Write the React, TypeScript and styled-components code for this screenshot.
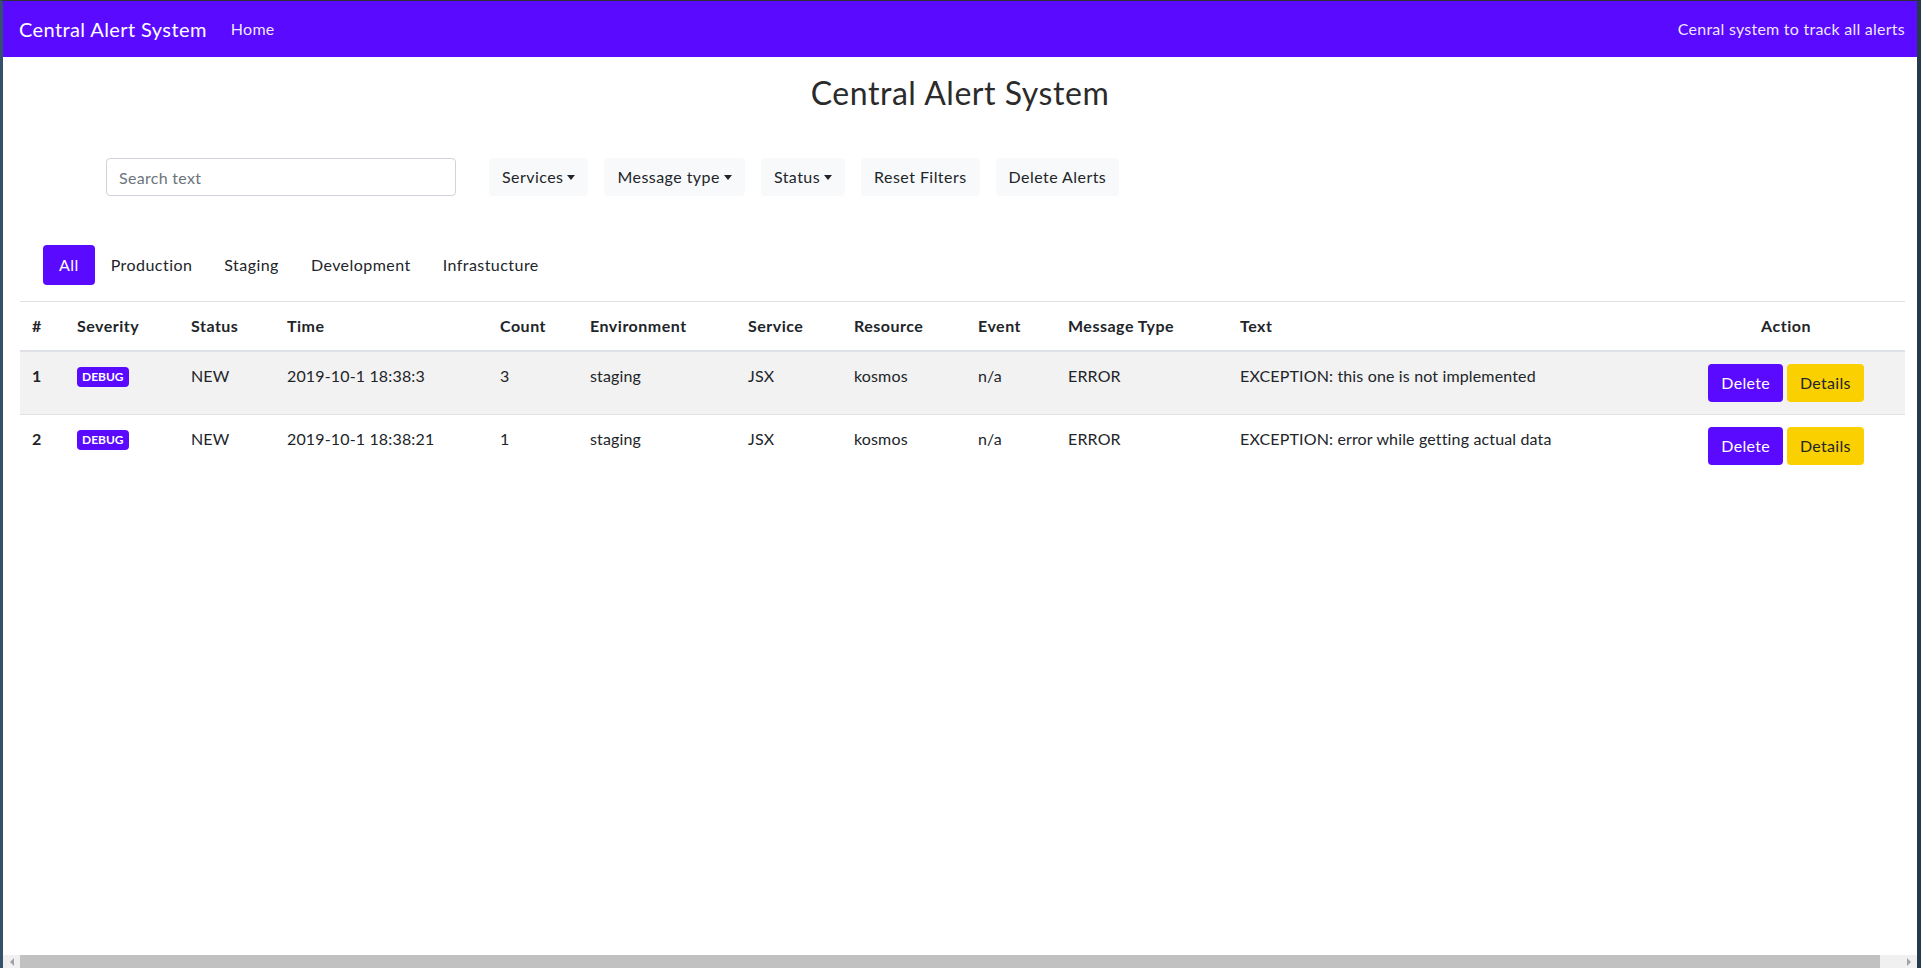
import React from "react";
import styled, { createGlobalStyle, css } from "styled-components";

const PURPLE = "#5a0aff";
const YELLOW = "#fbd000";
const FONT = `Lato, "Open Sans", "Liberation Sans", sans-serif`;

const GlobalStyle = createGlobalStyle`
  html, body {
    margin: 0;
    padding: 0;
    overflow: hidden;
  }
  body {
    font-family: ${FONT};
    font-size: 16px;
    line-height: 1.5;
    color: #212529;
    background: #fff;
  }
  * { box-sizing: border-box; }
`;

// outer window frame of the screenshot
const Frame = styled.div`
  height: 968px;
  display: flex;
  flex-direction: column;
  border-top: 1px solid #2a2f36;
  border-left: 3px solid #35506a;
  border-right: 4px solid #263a4e;
  background: #fff;
`;

const Viewport = styled.div`
  flex: 1;
  overflow: hidden;
`;

const Navbar = styled.nav`
  height: 56px;
  display: flex;
  align-items: center;
  padding: 0 12px 0 16px;
  background: ${PURPLE};
  letter-spacing: 0.3px;
`;

const Brand = styled.a`
  font-size: 20px;
  color: #fff;
  margin-right: 16px;
  letter-spacing: 0.4px;
  text-decoration: none;
`;

const NavLink = styled.a`
  padding: 0 8px;
  color: rgba(255, 255, 255, 0.92);
  text-decoration: none;
`;

const NavText = styled.span`
  margin-left: auto;
  color: rgba(255, 255, 255, 0.92);
  letter-spacing: 0.25px;
`;

const Title = styled.h2`
  margin: 17px 0 0;
  text-align: center;
  font-size: 32px;
  font-weight: 400;
  line-height: 1.2;
  letter-spacing: 0.55px;
  color: #2b2b2b;
`;

const FilterBar = styled.div`
  display: flex;
  align-items: center;
  gap: 16px;
  margin-top: 46px;
  padding-left: 103px;
`;

const SearchInput = styled.input`
  width: 350px;
  height: 38px;
  margin-right: 17px;
  padding: 6px 12px;
  font-family: ${FONT};
  font-size: 16px;
  letter-spacing: 0.3px;
  color: #495057;
  border: 1px solid #ced4da;
  border-radius: 4px;
  outline: none;
  &::placeholder { color: #6c757d; }
`;

const FilterButton = styled.button<{ $caret?: boolean }>`
  height: 38px;
  padding: 6px 12px;
  font-family: ${FONT};
  font-size: 16px;
  line-height: 24px;
  letter-spacing: 0.45px;
  color: #212529;
  background: #f8f9fa;
  border: 1px solid #f8f9fa;
  border-radius: 4px;
  cursor: pointer;
  ${(p) =>
    p.$caret &&
    css`
      &::after {
        content: "";
        display: inline-block;
        margin-left: 4px;
        vertical-align: 3px;
        border-top: 5px solid #212529;
        border-left: 4px solid transparent;
        border-right: 4px solid transparent;
      }
    `}
`;

const Tabs = styled.ul`
  display: flex;
  list-style: none;
  margin: 49px 0 0;
  padding: 0 0 0 40px;
`;

const Pill = styled.li<{ $active?: boolean }>`
  padding: 8px 16px;
  border-radius: 4px;
  letter-spacing: 0.45px;
  color: ${(p) => (p.$active ? "#fff" : "#212529")};
  background: ${(p) => (p.$active ? PURPLE : "transparent")};
  cursor: pointer;
`;

const Table = styled.table`
  width: 1885px;
  margin: 16px 0 0 17px;
  border-collapse: collapse;
  table-layout: fixed;
`;

const Th = styled.th<{ $center?: boolean }>`
  padding: 12px;
  text-align: ${(p) => (p.$center ? "center" : "left")};
  font-weight: 700;
  letter-spacing: 0.5px;
  border-top: 1px solid #dee2e6;
  border-bottom: 2px solid #dee2e6;
  vertical-align: bottom;
`;

const Row = styled.tr<{ $striped?: boolean }>`
  background: ${(p) => (p.$striped ? "#f2f2f2" : "transparent")};
`;

const Td = styled.td<{ $bold?: boolean; $center?: boolean }>`
  padding: 12px;
  vertical-align: top;
  border-top: 1px solid #dee2e6;
  font-weight: ${(p) => (p.$bold ? 700 : 400)};
  text-align: ${(p) => (p.$center ? "center" : "left")};
  letter-spacing: 0.15px;
  white-space: nowrap;
`;

const Badge = styled.span`
  display: inline-block;
  padding: 4px 5px;
  font-size: 12px;
  font-weight: 700;
  line-height: 1;
  letter-spacing: 0;
  color: #fff;
  background: ${PURPLE};
  border-radius: 4px;
  vertical-align: 1px;
`;

const ActionButton = styled.button<{ $variant: "delete" | "details" }>`
  padding: 6px 12px;
  margin: 0 2px;
  font-family: ${FONT};
  font-size: 16px;
  line-height: 24px;
  letter-spacing: 0.3px;
  border: 1px solid transparent;
  border-radius: 4px;
  cursor: pointer;
  color: ${(p) => (p.$variant === "delete" ? "#fff" : "#212529")};
  background: ${(p) => (p.$variant === "delete" ? PURPLE : YELLOW)};
`;

// fake horizontal scrollbar at the bottom of the window
const HScroll = styled.div`
  height: 13px;
  display: flex;
  align-items: center;
  background: #f0f0f0;
`;

const Arrow = styled.span<{ $dir: "left" | "right" }>`
  width: 17px;
  display: flex;
  justify-content: center;
  &::before {
    content: "";
    border-top: 4px solid transparent;
    border-bottom: 4px solid transparent;
    ${(p) =>
      p.$dir === "left"
        ? "border-right: 4px solid #a3a3a3;"
        : "border-left: 4px solid #a3a3a3;"}
  }
`;

const Thumb = styled.div`
  flex: 1;
  height: 13px;
  background: #c1c1c1;
  margin-right: 20px;
`;

const cols = [45, 114, 96, 213, 90, 158, 106, 124, 90, 172, 439, 238];

const headers = [
  "#",
  "Severity",
  "Status",
  "Time",
  "Count",
  "Environment",
  "Service",
  "Resource",
  "Event",
  "Message Type",
  "Text",
];

const alerts = [
  {
    id: 1,
    severity: "DEBUG",
    status: "NEW",
    time: "2019-10-1 18:38:3",
    count: 3,
    env: "staging",
    service: "JSX",
    resource: "kosmos",
    event: "n/a",
    type: "ERROR",
    text: "EXCEPTION: this one is not implemented",
  },
  {
    id: 2,
    severity: "DEBUG",
    status: "NEW",
    time: "2019-10-1 18:38:21",
    count: 1,
    env: "staging",
    service: "JSX",
    resource: "kosmos",
    event: "n/a",
    type: "ERROR",
    text: "EXCEPTION: error while getting actual data",
  },
];

const tabs = ["All", "Production", "Staging", "Development", "Infrastucture"];

export default function App() {
  return (
    <>
      <GlobalStyle />
      <Frame>
        <Viewport>
          <Navbar>
            <Brand>Central Alert System</Brand>
            <NavLink>Home</NavLink>
            <NavText>Cenral system to track all alerts</NavText>
          </Navbar>

          <Title>Central Alert System</Title>

          <FilterBar>
            <SearchInput placeholder="Search text" />
            <FilterButton $caret>Services</FilterButton>
            <FilterButton $caret>Message type</FilterButton>
            <FilterButton $caret>Status</FilterButton>
            <FilterButton>Reset Filters</FilterButton>
            <FilterButton>Delete Alerts</FilterButton>
          </FilterBar>

          <Tabs>
            {tabs.map((t, i) => (
              <Pill key={t} $active={i === 0}>
                {t}
              </Pill>
            ))}
          </Tabs>

          <Table>
            <colgroup>
              {cols.map((w, i) => (
                <col key={i} style={{ width: w }} />
              ))}
            </colgroup>
            <thead>
              <tr>
                {headers.map((h) => (
                  <Th key={h}>{h}</Th>
                ))}
                <Th $center>Action</Th>
              </tr>
            </thead>
            <tbody>
              {alerts.map((a, i) => (
                <Row key={a.id} $striped={i % 2 === 0}>
                  <Td $bold>{a.id}</Td>
                  <Td>
                    <Badge>{a.severity}</Badge>
                  </Td>
                  <Td>{a.status}</Td>
                  <Td>{a.time}</Td>
                  <Td>{a.count}</Td>
                  <Td>{a.env}</Td>
                  <Td>{a.service}</Td>
                  <Td>{a.resource}</Td>
                  <Td>{a.event}</Td>
                  <Td>{a.type}</Td>
                  <Td>{a.text}</Td>
                  <Td $center>
                    <ActionButton $variant="delete">Delete</ActionButton>
                    <ActionButton $variant="details">Details</ActionButton>
                  </Td>
                </Row>
              ))}
            </tbody>
          </Table>
        </Viewport>
        <HScroll>
          <Arrow $dir="left" />
          <Thumb />
          <Arrow $dir="right" />
        </HScroll>
      </Frame>
    </>
  );
}
